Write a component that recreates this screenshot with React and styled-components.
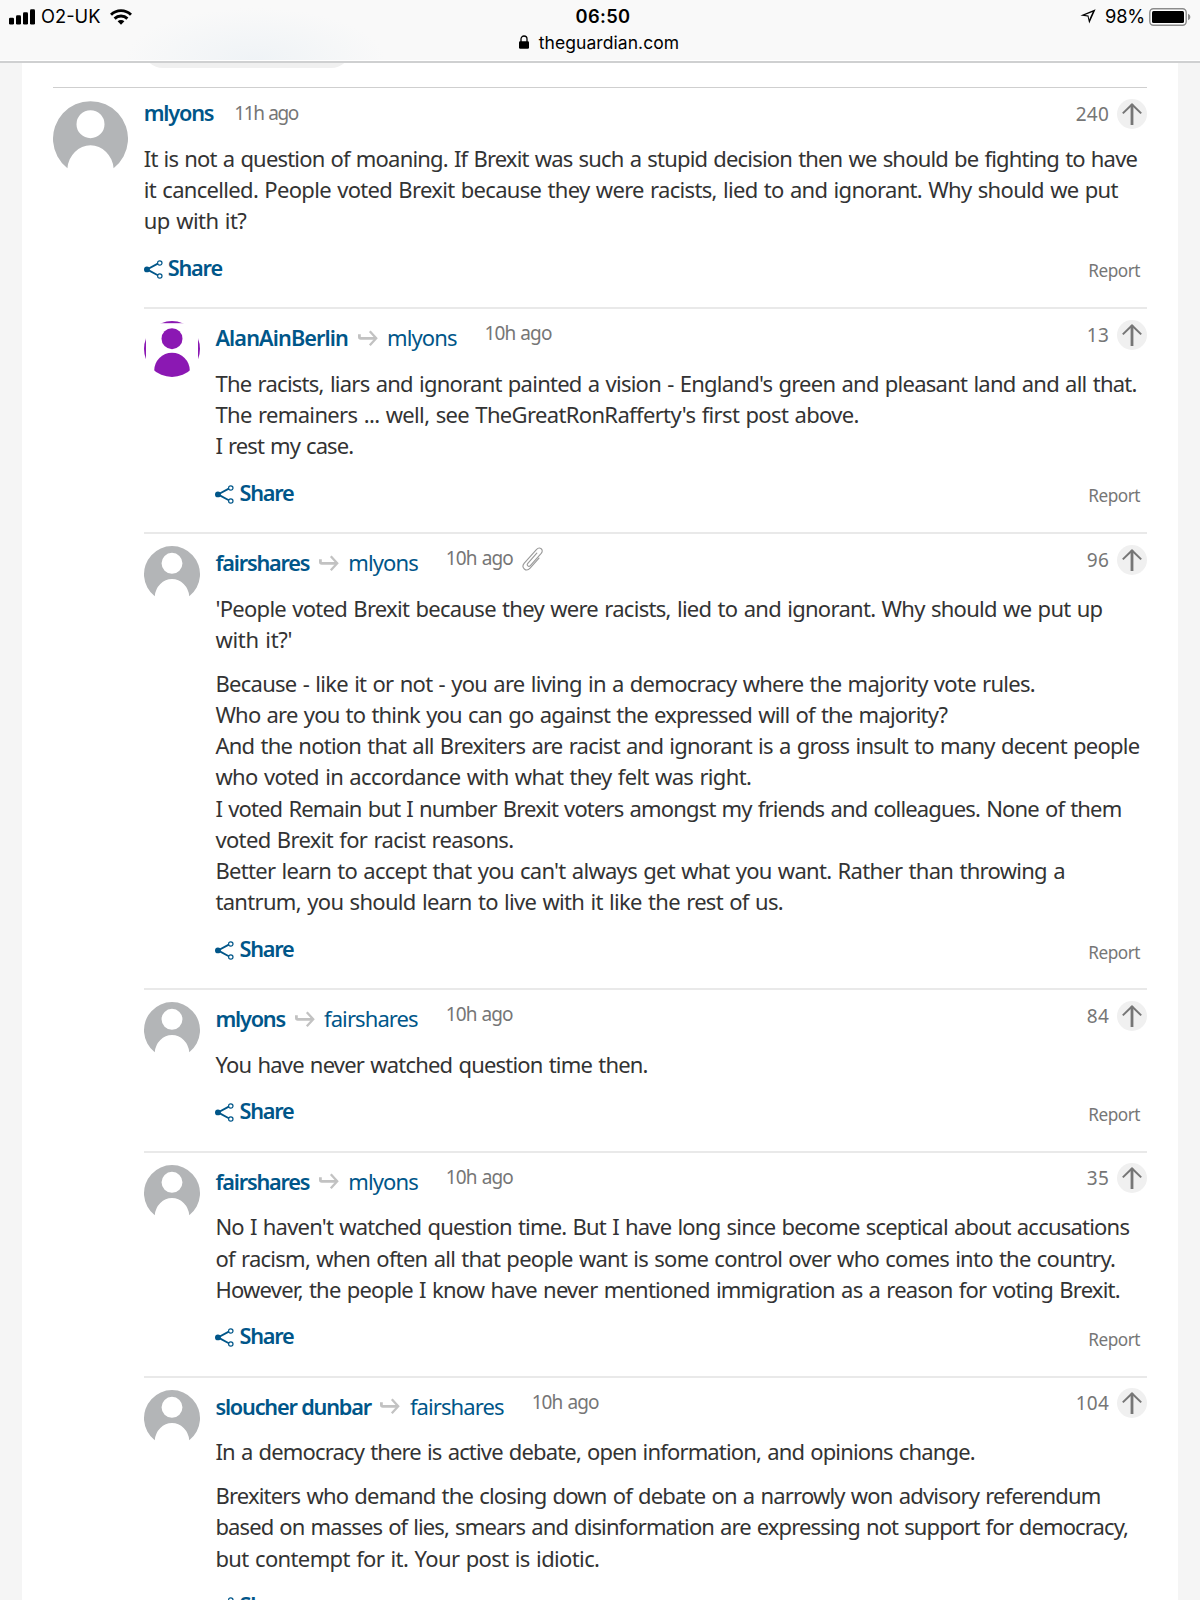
import React from 'react';
import styled, { createGlobalStyle } from 'styled-components';

const GlobalStyle = createGlobalStyle`
  * {
    box-sizing: border-box;
  }

  body {
    margin: 0;
    background: #f5f5f5;
    color: #333;
    font-family: 'Noto Sans', 'Open Sans', sans-serif;
  }
`;

// every line of a comment is [text, tracking]
const topComment = {
  author: 'mlyons',
  time: '11h ago',
  timeTracking: -1.4,
  votes: 240,
  paragraphs: [
    [
      ['It is not a question of moaning. If Brexit was such a stupid decision then we should be fighting to have', -0.82],
      ['it cancelled. People voted Brexit because they were racists, lied to and ignorant. Why should we put', -0.68],
      ['up with it?', -0.55],
    ],
  ],
};

const replies = [
  {
    id: 1,
    author: 'AlanAinBerlin',
    authorTracking: -0.9,
    replyTo: 'mlyons',
    votes: 13,
    purple: true,
    paragraphs: [
      [
        ["The racists, liars and ignorant painted a vision - England's green and pleasant land and all that.", -0.75],
        ["The remainers ... well, see TheGreatRonRafferty's first post above.", -0.65],
        ['I rest my case.', -0.9],
      ],
    ],
  },
  {
    id: 2,
    author: 'fairshares',
    replyTo: 'mlyons',
    votes: 96,
    clip: true,
    paragraphs: [
      [
        ["'People voted Brexit because they were racists, lied to and ignorant. Why should we put up", -0.71],
        ["with it?'", -0.31],
      ],
      [
        ['Because - like it or not - you are living in a democracy where the majority vote rules.', -0.72],
        ['Who are you to think you can go against the expressed will of the majority?', -0.79],
        ['And the notion that all Brexiters are racist and ignorant is a gross insult to many decent people', -0.76],
        ['who voted in accordance with what they felt was right.', -0.67],
        ['I voted Remain but I number Brexit voters amongst my friends and colleagues. None of them', -0.84],
        ['voted Brexit for racist reasons.', -0.66],
        ["Better learn to accept that you can't always get what you want. Rather than throwing a", -0.71],
        ['tantrum, you should learn to live with it like the rest of us.', -0.68],
      ],
    ],
  },
  {
    id: 3,
    author: 'mlyons',
    replyTo: 'fairshares',
    votes: 84,
    paragraphs: [[['You have never watched question time then.', -0.8]]],
  },
  {
    id: 4,
    author: 'fairshares',
    replyTo: 'mlyons',
    votes: 35,
    paragraphs: [
      [
        ["No I haven't watched question time. But I have long since become sceptical about accusations", -0.79],
        ['of racism, when often all that people want is some control over who comes into the country.', -0.74],
        ['However, the people I know have never mentioned immigration as a reason for voting Brexit.', -0.77],
      ],
    ],
  },
  {
    id: 5,
    author: 'sloucher dunbar',
    replyTo: 'fairshares',
    votes: 104,
    paragraphs: [
      [['In a democracy there is active debate, open information, and opinions change.', -0.84]],
      [
        ['Brexiters who demand the closing down of debate on a narrowly won advisory referendum', -0.81],
        ['based on masses of lies, smears and disinformation are expressing not support for democracy,', -0.89],
        ['but contempt for it. Your post is idiotic.', -0.62],
      ],
    ],
  },
];

const Screen = styled.div`
  display: flex;
  flex-direction: column;
  width: 1200px;
  height: 1600px;
  overflow: hidden;
`;

const BrowserBar = styled.header`
  flex: none;
  height: 63px;
  padding: 4px 9px 0;
  border-bottom: 2px solid #cfd0d1;
  background:
    radial-gradient(ellipse 130px 52px at 255px 60px, #eff3f6, rgba(239, 243, 246, 0)),
    #f9f9f9;
  box-shadow: inset 0 -1px #fff;
  color: #000;
  font-family: Inter, 'Liberation Sans', sans-serif;
`;

const StatusRow = styled.div`
  display: grid;
  grid-template-columns: 1fr auto 1fr;
  align-items: center;
  height: 25px;
`;

const StatusSide = styled.div`
  display: flex;
  align-items: center;
  justify-content: ${({ $end }) => ($end ? 'flex-end' : 'flex-start')};
`;

const StatusText = styled.span`
  font-size: 18.3px;
  line-height: 25px;
`;

const Carrier = styled(StatusText)`
  margin: 0 10px 0 5px;
`;

const Clock = styled(StatusText)`
  padding-left: 6px;
  font-weight: 600;
  letter-spacing: 0.35px;
`;

const Percent = styled(StatusText)`
  margin: 0 4px 0 9px;
  letter-spacing: -0.2px;
`;

const AddressRow = styled.div`
  display: flex;
  align-items: center;
  justify-content: center;
  gap: 10px;
  height: 26px;
  padding-right: 2px;
  font-size: 17.5px;
  letter-spacing: 0.06px;
`;

const Sheet = styled.main`
  flex: 1;
  min-height: 0;
  margin: 0 22px;
  padding: 0 31px;
  background: #fff;
  overflow: hidden;
`;

const PillWindow = styled.div`
  display: flex;
  align-items: flex-end;
  height: 5px;
  margin: 0 0 19px 90px;
  overflow: hidden;
`;

const Pill = styled.div`
  flex: none;
  width: 208px;
  height: 40px;
  border-radius: 20px;
  background: #f0f0f0;
`;

const TopComment = styled.article`
  display: grid;
  grid-template-columns: 90.75px 1fr;
  border-top: 1px solid #cfcfcf;
`;

const Reply = styled.article`
  display: grid;
  grid-template-columns: 71.7px 1fr;
  border-top: 2px solid #e9e9e9;
`;

const AvatarCell = styled.div`
  padding-top: ${({ $small }) => ($small ? 11.6 : 13)}px;

  svg {
    display: block;
  }
`;

const Meta = styled.div`
  display: flex;
  align-items: flex-start;
  height: ${({ $small }) => ($small ? 58.4 : 54.65)}px;
`;

const Names = styled.div`
  display: flex;
  align-items: center;
  gap: 9.5px;
  margin: ${({ $small }) => ($small ? '12.8px 28px 0 0' : '9px 21px 0 0')};
  color: #005689;
  line-height: 31.25px;
`;

const Author = styled.a`
  font-size: 21.7px;
  font-weight: 600;
  letter-spacing: ${({ $tracking }) => $tracking}px;
`;

const ReplyTo = styled.a`
  font-size: 22px;
  letter-spacing: -0.9px;
`;

const Time = styled.time`
  margin: ${({ $small }) => ($small ? 11.8 : 12.6)}px 9px 0 0;
  color: #767676;
  font-size: 19px;
  line-height: 24px;
  letter-spacing: ${({ $tracking }) => $tracking}px;
  word-spacing: 1px;
`;

const ClipCell = styled.span`
  margin-top: 12.5px;

  svg {
    display: block;
  }
`;

const Votes = styled.div`
  display: flex;
  align-items: flex-start;
  gap: 8px;
  margin: ${({ $small }) => ($small ? 10.4 : 11)}px 0 0 auto;
`;

const VoteCount = styled.span`
  padding-top: 3.1px;
  color: #767676;
  font-size: 19px;
  line-height: 24px;
  letter-spacing: 0.2px;
`;

const VoteButton = styled.button`
  display: grid;
  place-items: center;
  width: 30px;
  height: 30px;
  padding: 0;
  border: 0;
  border-radius: 50%;
  background: #f0f0f0;
`;

const Paragraph = styled.p`
  margin: 0;

  & + & {
    margin-top: 12.5px;
  }
`;

const Line = styled.span`
  display: block;
  font-size: 22px;
  line-height: 31.25px;
  letter-spacing: ${({ $tracking }) => $tracking}px;
  word-spacing: 1.2px;
  white-space: nowrap;
`;

const Actions = styled.div`
  display: flex;
  align-items: flex-start;
  justify-content: space-between;
  height: 70.85px;
  padding: 15.3px 7px 0 0;
`;

const ShareLink = styled.a`
  display: flex;
  gap: 5px;
  color: #005689;
  font-size: 21.7px;
  font-weight: 600;
  line-height: 31.25px;
  letter-spacing: -1.2px;

  svg {
    margin-top: 8px;
  }
`;

const ReportLink = styled.a`
  margin-top: 7.8px;
  color: #767676;
  font-size: 17.2px;
  line-height: 24px;
  letter-spacing: -0.5px;
`;

const SignalIcon = () => (
  <svg width='27' height='16' viewBox='0 0 27 16'>
    <rect x='0' y='8.8' width='5' height='6.8' rx='1.3' />
    <rect x='7' y='6.2' width='5' height='9.4' rx='1.3' />
    <rect x='14' y='3.2' width='5' height='12.4' rx='1.3' />
    <rect x='21' y='0.2' width='5' height='15.4' rx='1.3' />
  </svg>
);

const WifiIcon = () => (
  <svg width='22' height='16' viewBox='0 0 22 16' fill='none' stroke='#000' strokeWidth='2.9'>
    <path d='M1 5.7a14.2 14.2 0 0 1 20 0' />
    <path d='M4.6 9.6a9.1 9.1 0 0 1 12.8 0' />
    <path d='M11 15.8l-3.4-3.5a4.8 4.8 0 0 1 6.8 0z' fill='#000' stroke='none' />
  </svg>
);

const LocationIcon = () => (
  <svg width='16' height='15' viewBox='0 0 16 15'>
    <path
      fillRule='evenodd'
      d='M15.6 0.2L0.4 6.6L7.6 7.6L9.2 14.4zM12.6 3L9.2 10.6L8.5 6.6L5 6.1z'
    />
  </svg>
);

const BatteryIcon = () => (
  <svg width='42' height='18' viewBox='0 0 42 18'>
    <rect x='0.8' y='0.8' width='36.4' height='16.4' rx='3.6' fill='#fff' stroke='#8c8c8c' strokeWidth='1.4' />
    <rect x='3' y='3' width='32' height='12' rx='1.5' />
    <path d='M39 5.8q2.4 1 2.4 3.2t-2.4 3.2z' fill='#8c8c8c' />
  </svg>
);

const LockIcon = () => (
  <svg width='10' height='14' viewBox='0 0 10 14'>
    <path d='M2 7V4a3 3 0 0 1 6 0v3' fill='none' stroke='#000' strokeWidth='1.3' />
    <rect x='0' y='6.2' width='10' height='7.6' rx='1.2' />
  </svg>
);

const GreyAvatar = ({ size }) => (
  <svg width={size} height={size} viewBox='0 0 75 75'>
    <path
      fill='#b3b5b7'
      d='M14.4 67.2A37.5 37.5 0 1 1 60.6 67.2A23.2 25.2 0 0 0 14.4 67.2zM37.5 9.2a14 14 0 1 0 0 28a14 14 0 1 0 0-28z'
    />
  </svg>
);

const PurpleAvatar = () => (
  <svg width='56' height='56' viewBox='0 0 56 56'>
    <defs>
      <clipPath id='round'>
        <circle cx='28' cy='28' r='28' />
      </clipPath>
    </defs>
    <g clipPath='url(#round)' fill='#8b18b3'>
      <rect x='16' width='24' height='2.2' />
      <rect y='16' width='2' height='24' />
      <rect x='54' y='16' width='2' height='24' />
      <circle cx='28' cy='17.7' r='10.5' />
      <path d='M10.2 56V49.5a17.8 17.8 0 0 1 35.6 0V56z' />
    </g>
  </svg>
);

const ReplyArrow = () => (
  <svg width='20' height='16' viewBox='0 0 20 16' fill='none' stroke='#c2c2c2' strokeWidth='2.8'>
    <path d='M1.4 4.2v2.8q0 1.4 1.4 1.4H18' />
    <path d='M11.8 1.2L18.2 8.2L11.8 15.2' strokeWidth='2.3' />
  </svg>
);

const ClipIcon = () => (
  <svg width='22' height='24' viewBox='0 0 22 24' fill='none' stroke='#999' strokeWidth='1.1' strokeLinecap='round'>
    <path d='M14.8 6.2L5.8 16.4c-1.6 2 .9 4 2.5 2.2L19.2 6.4C22.3 2.6 17.6-1 14.4 2.6L2.3 16.2c-3.8 4.6 2 9.2 5.8 5L17 11.2' />
  </svg>
);

const UpArrow = () => (
  <svg width='20' height='22' viewBox='0 0 20 22' fill='none' stroke='#767676'>
    <path d='M10 22V1.5' strokeWidth='2.8' />
    <path d='M0.8 10.4L10 1.5L19.2 10.4' strokeWidth='2' />
  </svg>
);

const ShareIcon = () => (
  <svg width='19' height='19' viewBox='0 0 19 19' fill='none' stroke='#005689'>
    <path d='M13.8 3.6L3 9.4L13.8 15.2' strokeWidth='1.8' />
    <circle cx='2.9' cy='9.4' r='2.9' fill='#005689' stroke='none' />
    <circle cx='15.8' cy='3' r='2.2' strokeWidth='1.2' />
    <circle cx='15.8' cy='16' r='2.2' strokeWidth='1.2' />
  </svg>
);

const CommentContent = ({ comment, small }) => {
  const { author, authorTracking, replyTo, time, timeTracking, votes, clip, paragraphs } = comment;

  return (
    <div>
      <Meta $small={small}>
        <Names $small={small}>
          <Author $tracking={authorTracking || -1.2}>{author}</Author>
          {replyTo && <ReplyArrow />}
          {replyTo && <ReplyTo>{replyTo}</ReplyTo>}
        </Names>
        <Time $small={small} $tracking={timeTracking || -0.9}>
          {time || '10h ago'}
        </Time>
        {clip && (
          <ClipCell>
            <ClipIcon />
          </ClipCell>
        )}
        <Votes $small={small}>
          <VoteCount>{votes}</VoteCount>
          <VoteButton>
            <UpArrow />
          </VoteButton>
        </Votes>
      </Meta>
      {paragraphs.map((lines, index) => (
        <Paragraph key={index}>
          {lines.map(([text, tracking]) => (
            <Line key={text} $tracking={tracking}>
              {text}
            </Line>
          ))}
        </Paragraph>
      ))}
      <Actions>
        <ShareLink>
          <ShareIcon />
          Share
        </ShareLink>
        <ReportLink>Report</ReportLink>
      </Actions>
    </div>
  );
};

const App = () => {
  return (
    <Screen>
      <GlobalStyle />
      <BrowserBar>
        <StatusRow>
          <StatusSide>
            <SignalIcon />
            <Carrier>O2-UK</Carrier>
            <WifiIcon />
          </StatusSide>
          <Clock>06:50</Clock>
          <StatusSide $end>
            <LocationIcon />
            <Percent>98%</Percent>
            <BatteryIcon />
          </StatusSide>
        </StatusRow>
        <AddressRow>
          <LockIcon />
          <span>theguardian.com</span>
        </AddressRow>
      </BrowserBar>

      <Sheet>
        <PillWindow>
          <Pill />
        </PillWindow>
        <TopComment>
          <AvatarCell>
            <GreyAvatar size={75} />
          </AvatarCell>
          <div>
            <CommentContent comment={topComment} />
            {replies.map((reply) => (
              <Reply key={reply.id}>
                <AvatarCell $small>
                  {reply.purple ? <PurpleAvatar /> : <GreyAvatar size={56} />}
                </AvatarCell>
                <CommentContent comment={reply} small />
              </Reply>
            ))}
          </div>
        </TopComment>
      </Sheet>
    </Screen>
  );
};

export default App;
